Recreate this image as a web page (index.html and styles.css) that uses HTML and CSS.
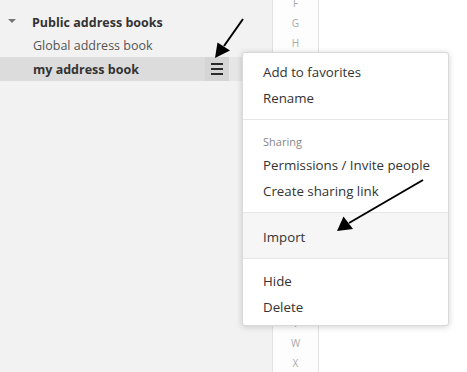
FILE: index.html
```html
<!DOCTYPE html>
<html lang="en">
  <head>
    <meta charset="UTF-8" />
    <meta name="viewport" content="width=device-width, initial-scale=1.0" />
    <title>Address books</title>
    <link rel="stylesheet" href="styles.css">
  </head>
  <body>
    <div class="app">
      <div class="sidebar">
        <div class="tree-head">
          <span class="caret"></span>
          <span>Public address books</span>
        </div>
        <div class="tree-item">Global address book</div>
        <div class="tree-item selected">
          <span class="item-name">my address book</span>
          <button class="item-menu" type="button">
            <svg width="12" height="12" viewBox="0 0 12 12">
              <rect x="0" y="0" width="12" height="2" />
              <rect x="0" y="5" width="12" height="2" />
              <rect x="0" y="10" width="12" height="2" />
            </svg>
          </button>
          <span class="item-tail"></span>
        </div>
      </div>
      <div class="letters">
        <ul>
          <li>F</li><li>G</li><li>H</li><li>I</li><li>J</li>
          <li>K</li><li>L</li><li>M</li><li>N</li><li>O</li>
          <li>P</li><li>Q</li><li>R</li><li>S</li><li>T</li>
          <li>U</li><li>V</li><li>W</li><li>X</li>
        </ul>
      </div>
      <div class="main"></div>
    </div>

    <ul class="popup">
      <li class="menu-section">
        <div class="menu-item">Add to favorites</div>
        <div class="menu-item">Rename</div>
      </li>
      <li class="menu-section">
        <div class="menu-label">Sharing</div>
        <div class="menu-item">Permissions / Invite people</div>
        <div class="menu-item">Create sharing link</div>
      </li>
      <li class="menu-section active">
        <div class="menu-item">Import</div>
      </li>
      <li class="menu-section last">
        <div class="menu-item">Hide</div>
        <div class="menu-item">Delete</div>
      </li>
    </ul>

    <svg class="arrows" width="467" height="372" viewBox="0 0 467 372">
      <line x1="243" y1="19" x2="224" y2="46" />
      <polygon points="215,58 217.5,42.5 230,50.5" />
      <line x1="423" y1="180" x2="349" y2="223" />
      <polygon points="337,231 343.5,216.5 353,229" />
    </svg>
  </body>
</html>
```

FILE: styles.css
```css
body {
  font-family: "Open Sans", "Noto Sans", sans-serif;
  font-size: 13px;
  color: #333;
  margin: 0;
  width: 467px;
  height: 372px;
  overflow: hidden;
  position: relative;
  background: #fff;
}
.app {
  display: flex;
  height: 372px;
}
.sidebar {
  width: 273px;
  box-sizing: border-box;
  background-color: #f2f2f2;
  border-right: 1px solid #e2e2e2;
  padding-top: 9px;
  font-size: 12.5px;
}
.tree-head {
  display: flex;
  align-items: center;
  height: 24px;
  padding-left: 8px;
  font-weight: bold;
  color: #333;
}
.caret {
  width: 0;
  height: 0;
  border-top: 4px solid #777;
  border-left: 4.5px solid transparent;
  border-right: 4.5px solid transparent;
  margin-right: 16px;
}
.tree-head span + span {
  padding-top: 2px;
}
.tree-item {
  height: 24px;
  line-height: 26px;
  padding-left: 33px;
  color: #555;
}
.tree-item.selected {
  display: flex;
  padding-left: 0;
  font-weight: bold;
  color: #333;
}
.item-name {
  flex: 1;
  padding-left: 33px;
  background-color: #dcdcdc;
}
.item-menu {
  width: 24px;
  height: 24px;
  padding: 0;
  border: none;
  background-color: #d5d5d5;
  display: flex;
  align-items: center;
  justify-content: center;
}
.item-menu svg {
  fill: #2b2b2b;
}
.item-tail {
  width: 43px;
  background-color: #e6e6e6;
}
.letters {
  width: 46px;
  box-sizing: border-box;
  border-right: 1px solid #e2e2e2;
  background-color: #fdfdfd;
}
.letters ul {
  list-style: none;
  margin: -7px 0 0;
  padding: 0;
}
.letters li {
  height: 20px;
  line-height: 20px;
  text-align: center;
  font-size: 10px;
  color: #aaa;
}
.main {
  flex: 1;
  background-color: #fff;
}
.popup {
  position: absolute;
  left: 242px;
  top: 52px;
  width: 207px;
  box-sizing: border-box;
  margin: 0;
  padding: 0;
  list-style: none;
  font-size: 13.3px;
  background: #fff;
  border: 1px solid #d9d9d9;
  border-radius: 3px;
  box-shadow: 0 1px 6px rgba(0, 0, 0, 0.18);
}
.menu-section {
  padding: 7px 0;
}
.menu-section + .menu-section {
  border-top: 1px solid #e6e6e6;
}
.menu-section.active {
  background-color: #f6f6f6;
  padding: 12px 0 7px;
}
.menu-section.last {
  padding: 10px 0 4px;
}
.menu-item {
  height: 26px;
  line-height: 24px;
  padding-left: 20px;
  color: #333;
}
.menu-label {
  height: 26px;
  line-height: 30px;
  padding-left: 20px;
  font-size: 11px;
  color: #888;
}
.arrows {
  position: absolute;
  left: 0;
  top: 0;
  pointer-events: none;
}
.arrows line {
  stroke: #000;
  stroke-width: 2;
}
.arrows polygon {
  fill: #000;
}
```
